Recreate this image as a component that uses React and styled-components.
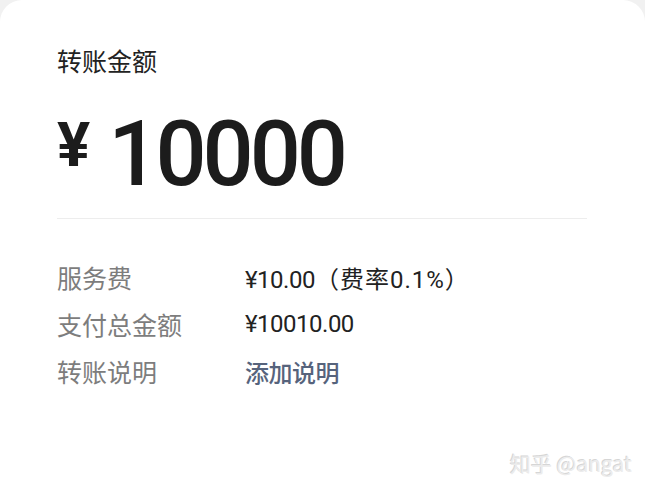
import React from "react";
import styled, { createGlobalStyle } from "styled-components";

const Global = createGlobalStyle`
  html, body { margin: 0; padding: 0; background: #f1f1f1; }
  body { font-family: Roboto, "Noto Sans CJK SC", sans-serif; }
`;

const Card = styled.div`
  position: relative;
  width: 645px;
  height: 500px;
  box-sizing: border-box;
  background: #ffffff;
  border-radius: 22px 22px 0 0;
  padding: 43px 58px 0 57px;
  overflow: hidden;
`;

const Title = styled.div`
  font-family: "Noto Sans CJK SC", sans-serif;
  font-size: 25px;
  line-height: 35px;
  color: #222222;
`;

const AmountRow = styled.div`
  display: flex;
  align-items: flex-start;
  margin-top: 32px;
  padding-bottom: 18px;
  border-bottom: 1px solid #ededed;
`;

const Yen = styled.span`
  font-family: Roboto, sans-serif;
  font-weight: 700;
  font-size: 62px;
  line-height: 1;
  color: #1c1c1c;
  margin-top: 4px;
  margin-right: 18px;
`;

const Amount = styled.span`
  font-family: Roboto, sans-serif;
  font-weight: 500;
  font-size: 90px;
  line-height: 1;
  letter-spacing: -4px;
  color: #1c1c1c;
`;

const Rows = styled.div`
  display: flex;
  flex-direction: column;
  gap: 12px;
  margin-top: 40px;
`;

const Row = styled.div`
  display: grid;
  grid-template-columns: 188px 1fr;
  align-items: center;
  height: 35px;
`;

const Label = styled.span`
  font-family: "Noto Sans CJK SC", sans-serif;
  font-size: 25px;
  color: #7d7d7d;
`;

const Value = styled.span`
  font-family: Roboto, "Noto Sans CJK SC", sans-serif;
  font-size: 24px;
  letter-spacing: -0.5px;
  color: ${(p) => (p.$link ? "#56637c" : "#222222")};
  font-weight: ${(p) => (p.$link ? 500 : 400)};
`;

const Paren = styled.span`
  letter-spacing: 1px;
`;

const Watermark = styled.div`
  position: absolute;
  right: 13px;
  bottom: 22px;
  font-family: "Noto Sans CJK SC", sans-serif;
  font-size: 21px;
  color: #ececec;
  text-shadow: -1px -1px 0 #d6d6d6, 1px 1px 0 #ffffff;
`;

export default function App() {
  return (
    <>
      <Global />
      <Card>
        <Title>转账金额</Title>
        <AmountRow>
          <Yen>¥</Yen>
          <Amount>10000</Amount>
        </AmountRow>
        <Rows>
          <Row>
            <Label>服务费</Label>
            <Value>
              ¥10.00<Paren>（费率0.1%）</Paren>
            </Value>
          </Row>
          <Row>
            <Label>支付总金额</Label>
            <Value>¥10010.00</Value>
          </Row>
          <Row>
            <Label>转账说明</Label>
            <Value $link>添加说明</Value>
          </Row>
        </Rows>
        <Watermark>知乎 @angat</Watermark>
      </Card>
    </>
  );
}
